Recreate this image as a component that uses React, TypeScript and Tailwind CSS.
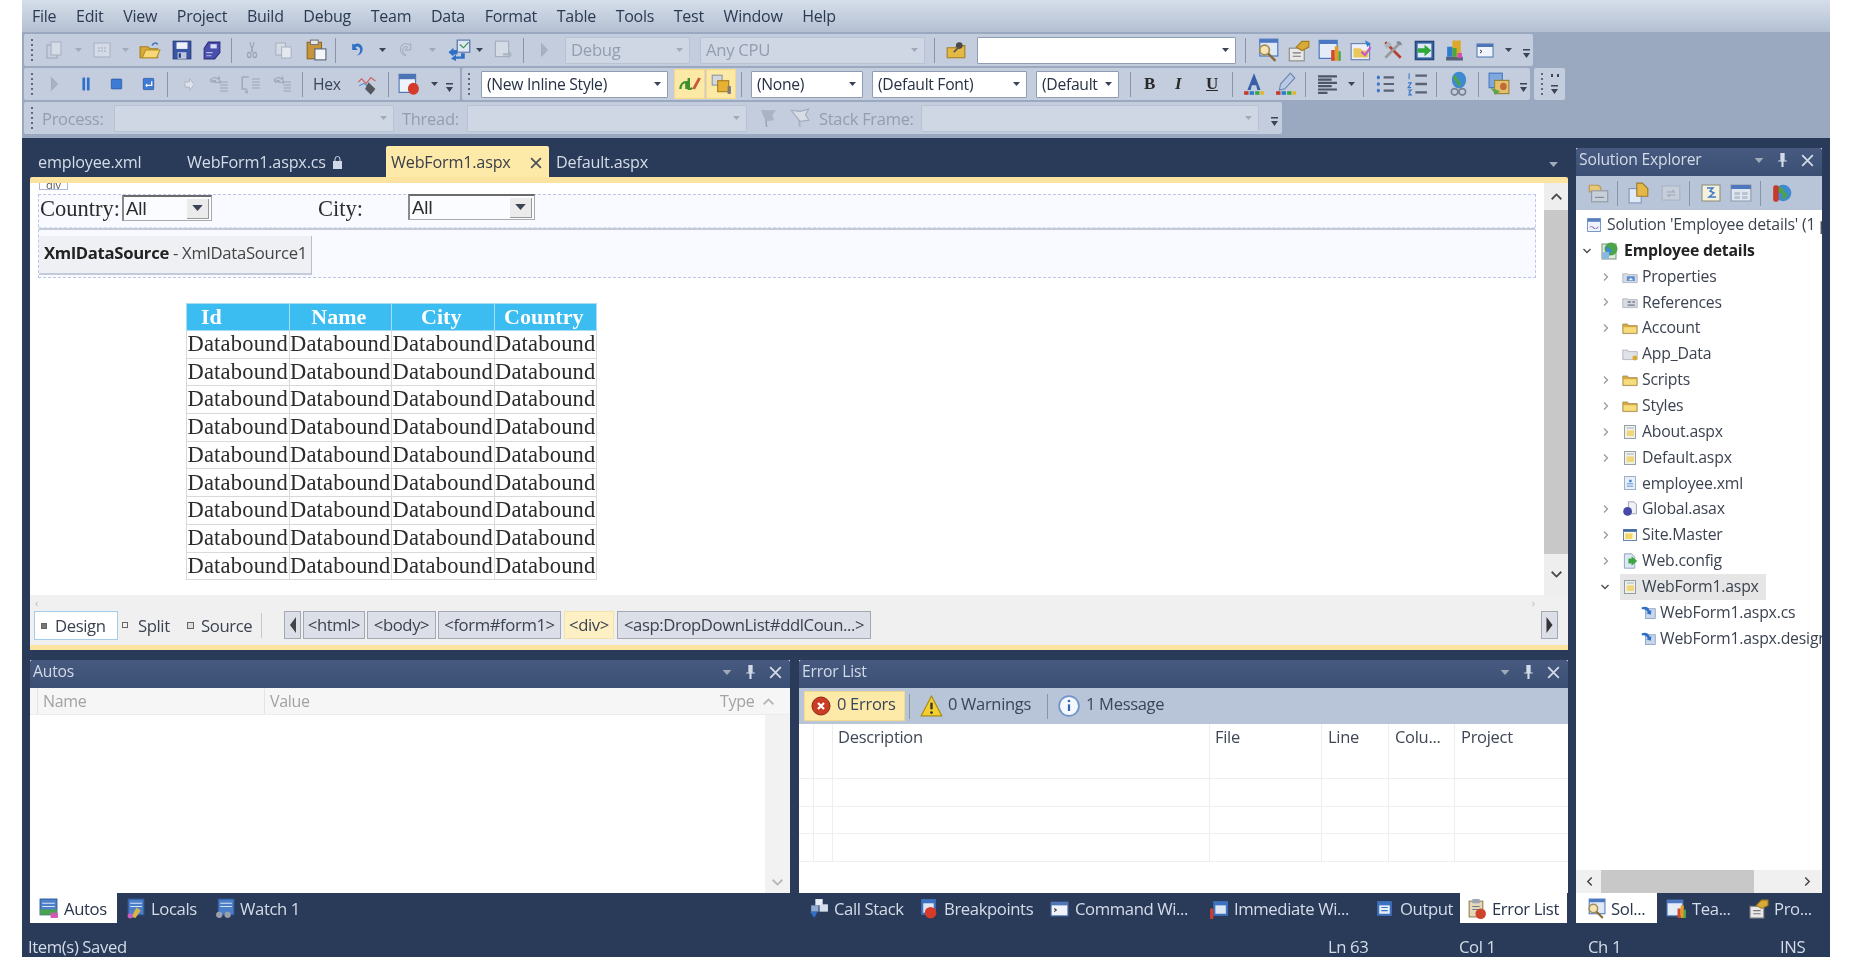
import React from "react";

// small drawn icons, reference is a blurry VS2012 screenshot so these stay simple
const icons: Record<string, React.ReactNode> = {
  newProject: (<><rect x="3" y="5" width="10" height="13" fill="#c9d1dc" stroke="#8b96a8" /><rect x="7" y="2" width="10" height="13" fill="#dde3ec" stroke="#99a3b4" /></>),
  addItem: (<><rect x="2" y="3" width="16" height="14" fill="#dce2eb" stroke="#9aa5b6" /><path d="M6 8h2M9 8h2M12 8h2M6 11h2M9 11h2M12 11h2" stroke="#8e99ab" /></>),
  open: (<><path d="M1 7h7l2 2h7v8H1z" fill="#d9a93a" stroke="#a57d1e" /><path d="M3 17l3-7h13l-3 7z" fill="#f6d876" stroke="#b98f2c" /><path d="M12 6c1-3 4-3 5-1" stroke="#3c6fb5" strokeWidth="1.5" fill="none" /></>),
  save: (<><rect x="2" y="2" width="16" height="16" fill="#3b55a5" stroke="#27397a" /><rect x="5" y="3" width="10" height="6" fill="#eef2f8" /><rect x="6" y="12" width="8" height="6" fill="#bcc6dc" /><rect x="7" y="13" width="2" height="4" fill="#27397a" /></>),
  saveAll: (<><path d="M7 2h11v10l-5 6H3V8z" fill="#4a4fae" stroke="#2c2f7c" /><rect x="9" y="4" width="6" height="4" fill="#d8dcf3" /><path d="M5 12h6M5 15h5" stroke="#b5b9ea" /></>),
  cut: (<><path d="M7 2l4 10M13 2L9 12" stroke="#9aa3b1" strokeWidth="1.6" /><circle cx="6" cy="15" r="2.5" fill="none" stroke="#9aa3b1" strokeWidth="1.5" /><circle cx="14" cy="15" r="2.5" fill="none" stroke="#9aa3b1" strokeWidth="1.5" /></>),
  copy: (<><rect x="2" y="3" width="10" height="12" fill="#d6dce6" stroke="#a6afbe" /><rect x="8" y="7" width="10" height="11" fill="#e4e8ef" stroke="#a6afbe" /></>),
  paste: (<><rect x="2" y="3" width="13" height="15" fill="#c8963a" stroke="#8c6820" /><rect x="5" y="1" width="7" height="4" fill="#e8e8e8" stroke="#7a7a7a" /><rect x="9" y="9" width="10" height="10" fill="#f5f6f8" stroke="#56647c" /></>),
  undo: (<path d="M4 3v7h7l-3-3c3-2 6 0 6 3 0 3-2 5-4 6 4 0 7-3 7-7 0-5-6-8-10-5z" fill="#2f6fc6" />),
  redo: (<path d="M16 3v7H9l3-3c-3-2-6 0-6 3 0 3 2 5 4 6-4 0-7-3-7-7 0-5 6-8 10-5z" fill="none" stroke="#98a2b3" />),
  nav: (<><rect x="9" y="1" width="10" height="11" fill="#dfe7f3" stroke="#5874ad" /><path d="M11 5l3 3 4-5" stroke="#36934a" fill="none" /><path d="M2 12l4-4v2h3v4H6v2l-2-2z" fill="#2f6fc6" /><path d="M12 13v3H8v-2l-4 4 4 2v-2h7v-5z" fill="#2f6fc6" /></>),
  find: (<><rect x="4" y="2" width="12" height="14" fill="#d5dbe5" stroke="#a4adbc" /><path d="M11 13l5 0v-3l3 4-3 4v-3h-5z" fill="#aab3c2" /></>),
  play: (<path d="M3 2l12 8-12 8z" fill="#a9b2c1" stroke="#98a2b2" />),
  searchFolder: (<><path d="M2 8h7l2-2h7v11H2z" fill="#e3b845" stroke="#a57d1e" /><circle cx="13" cy="6" r="3" fill="#4a4a4a" /><path d="M8 12l5-5" stroke="#555" strokeWidth="1.5" /></>),
  finder: (<><rect x="4" y="1" width="15" height="14" fill="#dfe8f5" stroke="#4c78c2" /><rect x="4" y="1" width="15" height="3" fill="#4c78c2" /><circle cx="8" cy="10" r="4" fill="#f3e3b5" stroke="#a38b52" strokeWidth="1.4" /><path d="M11 13l6 6" stroke="#8a6a2e" strokeWidth="2" /></>),
  props: (<><rect x="2" y="8" width="13" height="11" fill="#e8e8e8" stroke="#8d8d8d" /><path d="M8 7l5-5h6v5l-6 3z" fill="#d9a93a" stroke="#a57d1e" /><path d="M5 12h7M5 15h7" stroke="#777" /></>),
  chartWin: (<><rect x="1" y="2" width="15" height="15" fill="#e4ecf8" stroke="#4c78c2" /><rect x="1" y="2" width="15" height="3" fill="#4c78c2" /><rect x="11" y="10" width="3" height="9" fill="#cf4a2d" /><rect x="14" y="7" width="3" height="12" fill="#e39b26" /><rect x="17" y="11" width="2" height="8" fill="#4ba646" /></>),
  mailWin: (<><rect x="1" y="4" width="16" height="14" fill="#eef0f7" stroke="#6781b6" /><path d="M3 8h6l2 2h5v6H3z" fill="#e9c75c" /><path d="M10 11l3 3 5-7" stroke="#c85bc4" strokeWidth="2" fill="none" /><path d="M13 1l5 3-3 3z" fill="#2f7bd0" /></>),
  tools: (<><path d="M3 3l14 14" stroke="#b73e2e" strokeWidth="2.4" /><path d="M17 3L3 17" stroke="#9a9a9a" strokeWidth="2.4" /><path d="M2 6l4-4 3 3-4 4z" fill="#aeb4bd" /><path d="M14 2c3 0 4 2 4 4l-3-1-2-2z" fill="#7f8894" /></>),
  goGreen: (<><rect x="2" y="2" width="16" height="16" fill="#315f9f" stroke="#223f70" /><rect x="4" y="4" width="12" height="12" fill="#e1e9f6" /><path d="M4 8h6V5l6 5-6 5v-3H4z" fill="#2fa838" /></>),
  stack: (<><rect x="2" y="15" width="16" height="3" fill="#56637b" /><rect x="3" y="7" width="7" height="8" fill="#2f7bd0" /><rect x="8" y="2" width="8" height="13" fill="#dca92c" /><rect x="8" y="8" width="4" height="7" fill="#4ba646" /><rect x="13" y="12" width="4" height="4" fill="#d34bb0" /></>),
  cmdWin: (<><rect x="2" y="4" width="16" height="13" fill="#f0f4fa" stroke="#4d74b4" /><rect x="2" y="4" width="16" height="3" fill="#4d74b4" /><path d="M5 10l2 1.5L5 13" stroke="#333" fill="none" /></>),
  pause: (<><rect x="4" y="2" width="4.5" height="16" fill="#2f6fd0" /><rect x="11.5" y="2" width="4.5" height="16" fill="#2f6fd0" /></>),
  stop: (<rect x="2" y="3" width="16" height="14" rx="1" fill="#3d7bd6" stroke="#245199" />),
  restart: (<><rect x="2" y="2" width="16" height="16" rx="1" fill="#3d7bd6" stroke="#245199" /><path d="M14 6v5H8V9l-3 3 3 3v-2h8V6z" fill="#fff" /></>),
  stepA: (<path d="M10 3l7 7-7 7v-4H3V7h7z" fill="#dfe4ec" stroke="#a4adbc" />),
  stepB: (<><path d="M9 8h9M11 11h7M11 14h7M11 17h7" stroke="#9aa3b1" /><path d="M2 6c2-3 5-3 7-1l1-2 1 6-6-1 2-1c-1-1-3-1-4 1z" fill="#c3cad6" stroke="#9aa3b1" /></>),
  stepC: (<><path d="M2 3h6M2 3v12h4" stroke="#a1aab9" fill="none" strokeWidth="1.4" /><path d="M11 5h7M11 8h7M11 11h7M11 14h7" stroke="#9aa3b1" /><path d="M4 18l3-3 0 5z" fill="#a1aab9" /></>),
  hexWave: (<><path d="M1 8l3-3 4 4 4-5 4 3" stroke="#d2605a" fill="none" /><path d="M2 11l4-2 4 3" stroke="#5b8ed1" fill="none" /><path d="M10 8l6 6-4 5-5-5z" fill="#55585e" /></>),
  breakpointWin: (<><rect x="1" y="2" width="15" height="15" fill="#eef2f9" stroke="#4d74b4" /><rect x="1" y="2" width="15" height="4" fill="#4d74b4" /><circle cx="14" cy="14" r="5" fill="#d53b2a" /></>),
  styleAt: (<><path d="M2 15c0-4 2-7 5-7v7M9 4v11c2 0 3-1 3-1" stroke="#3e8f2f" strokeWidth="2" fill="none" /><path d="M13 15l5-11" stroke="#c85b3a" strokeWidth="2.5" /></>),
  styleCopy: (<><rect x="2" y="2" width="9" height="9" fill="#d3d7de" stroke="#8d96a4" /><rect x="7" y="7" width="10" height="10" fill="#e7b233" stroke="#a57d1e" /><rect x="16" y="12" width="3" height="7" fill="#7a7a7a" /></>),
  fontColor: (<><path d="M10 1l6 14h-3l-1-4H8l-1 4H4z" fill="#3b5ea8" /><rect x="1" y="16" width="4" height="3" fill="#c8392b" /><rect x="6" y="16" width="4" height="3" fill="#2b7bd0" /><rect x="11" y="16" width="4" height="3" fill="#3ba73f" /><rect x="16" y="16" width="3" height="3" fill="#e5b524" /></>),
  highlight: (<><path d="M14 1l4 4-9 9-5 1 1-5z" fill="#b8c9e6" stroke="#6d83ac" /><rect x="1" y="16" width="4" height="3" fill="#c8392b" /><rect x="6" y="16" width="4" height="3" fill="#2b7bd0" /><rect x="11" y="16" width="4" height="3" fill="#3ba73f" /><rect x="16" y="16" width="3" height="3" fill="#e5b524" /></>),
  align: (<path d="M1 3h18M1 6h13M1 9h18M1 12h13M1 15h18M1 18h9" stroke="#4d5666" strokeWidth="2" />),
  bullets: (<><path d="M8 4h11M8 10h11M8 16h11" stroke="#5a6374" strokeWidth="2" /><circle cx="2.5" cy="4" r="1.7" fill="#3c78c9" /><circle cx="2.5" cy="10" r="1.7" fill="#3c78c9" /><circle cx="2.5" cy="16" r="1.7" fill="#3c78c9" /></>),
  numbers: (<><path d="M8 3h11M8 10h11M8 17h11" stroke="#5a6374" strokeWidth="2" /><path d="M2 1v5M1 9h3l-3 4h3M1 15h3l-2 2 2 2H1" stroke="#3c78c9" fill="none" /></>),
  globeLink: (<><circle cx="10" cy="7" r="6.5" fill="#3f89d3" /><path d="M6 3c3 1 2 4 5 5 2 1 0 3-1 4-2-1-1-3-3-4-2-1-3-3-1-5z" fill="#4aa54a" /><path d="M3 16a3 2.5 0 0 1 6 0 3 2.5 0 0 1-6 0M10 16a3 2.5 0 0 1 6 0 3 2.5 0 0 1-6 0" stroke="#78808f" strokeWidth="1.4" fill="none" /></>),
  webTools: (<><rect x="1" y="1" width="12" height="12" fill="#7fa9de" stroke="#4c78c2" /><rect x="6" y="7" width="13" height="11" fill="#e3c16a" stroke="#98823f" /><path d="M2 13l5 6 4-3" fill="#5da34b" /><circle cx="14" cy="12" r="3" fill="#c26a3a" /></>),
  flag: (<><path d="M7 18L5 3" stroke="#98a2b2" strokeWidth="1.6" /><path d="M1 3h16l-4 4 2 5-9 1z" fill="#aab3c2" /></>),
  flagX: (<><path d="M10 18L8 3" stroke="#a8b1bf" strokeWidth="1.6" /><path d="M2 3l8 1 8-2-3 5 3 5-8 1z" fill="#d7dce5" stroke="#a3acba" /></>),
  seFiles: (<><path d="M2 3h8l2 2v4H2z" fill="#e9c775" stroke="#b69a57" /><rect x="4" y="8" width="14" height="10" fill="#c9cfd9" stroke="#8f99a9" /><path d="M7 14h8" stroke="#7b8798" /></>),
  seCopy: (<><rect x="1" y="6" width="11" height="13" fill="#dfe9f7" stroke="#7e97bd" /><path d="M8 1h5l5 5v7H8z" fill="#e4b94a" stroke="#9a7a2e" /></>),
  seRefresh: (<><rect x="2" y="3" width="16" height="14" fill="#ccd3de" stroke="#a3acba" /><path d="M6 9h7l-2-2M14 12H7l2 2" stroke="#8f99a9" fill="none" /></>),
  seCode: (<><rect x="1" y="2" width="18" height="16" fill="#f3f0de" stroke="#8a8a72" /><path d="M6 5h6l-3 3 4 2-5 4h7" stroke="#3c78c9" fill="none" strokeWidth="1.4" /></>),
  seDesign: (<><rect x="1" y="2" width="18" height="16" fill="#dfe6f0" stroke="#8e99ab" /><rect x="1" y="2" width="18" height="4" fill="#4d78bd" /><path d="M4 9h5v3H4zM11 9h5v3h-5zM4 13h5v3H4zM11 13h5v3h-5z" fill="#b9c3d2" /></>),
  seGlobe: (<><circle cx="11" cy="10" r="7.5" fill="#3f89d3" /><path d="M8 4c4 1 3 5 6 6 2 1 0 5-2 6-3-2 0-4-3-6-3-1-4-4-1-6z" fill="#4aa54a" /><rect x="2" y="3" width="5" height="15" rx="2" fill="#c8392b" /></>),
  solution: (<><rect x="2" y="2" width="16" height="16" fill="#eef2fa" stroke="#5b7fbd" /><rect x="2" y="2" width="16" height="4" fill="#5b7fbd" /><path d="M4 14c2-4 4-3 6-1s4 3 6-1c-2 0-5 5-7 2s-3-2-5 0z" fill="#8a58b8" /></>),
  webProject: (<><rect x="2" y="3" width="14" height="15" fill="#dcecdc" stroke="#7c8f7c" /><circle cx="11" cy="8" r="6.5" fill="#4ba646" /><path d="M7 5c3 1 2 3 5 4l-3 6c-3-2-4-6-2-10z" fill="#3f89d3" /><rect x="2" y="11" width="7" height="7" fill="#8ab7dd" /></>),
  folderProps: (<><path d="M1 6h6l1 1h11v10H1z" fill="#d8dce2" stroke="#a8afba" /><path d="M6 9h10v6H6z" fill="#5d8fd0" /><path d="M8 14l3-3 3 3z" fill="#e4ecf8" /></>),
  folderRefs: (<><path d="M1 6h6l1 1h11v10H1z" fill="#d8dce2" stroke="#a8afba" /><path d="M7 10h4M13 10h3M7 14h9" stroke="#6f7785" strokeWidth="1.6" /></>),
  folder: (<><path d="M1 5h6l1 2h11v10H1z" fill="#d9a93a" stroke="#a08c5f" /><path d="M2 9h16v7H2z" fill="#f7dc7c" /></>),
  folderGray: (<><path d="M1 5h6l1 2h11v10H1z" fill="#dfe2e7" stroke="#a8afba" /><circle cx="16" cy="15" r="3" fill="#e0a92e" /></>),
  aspx: (<><rect x="3" y="2" width="14" height="16" fill="#eef1e4" stroke="#7c8a9c" /><rect x="6" y="8" width="9" height="7" fill="#f2d77a" /><path d="M6 5h9" stroke="#8fa4c0" /></>),
  xml: (<><rect x="3" y="2" width="14" height="16" fill="#e7eef8" stroke="#87a0c2" /><path d="M9 6h3v3H9z" fill="#3f83cf" /><path d="M6 11h8M6 14h8" stroke="#3f83cf" /></>),
  asax: (<><path d="M8 1h7l3 3v12H8z" fill="#eef1f6" stroke="#8a94a6" /><circle cx="7" cy="13" r="5.5" fill="#4549a8" /></>),
  master: (<><rect x="2" y="3" width="16" height="14" fill="#fbf7df" stroke="#3e68a8" /><rect x="2" y="3" width="16" height="3" fill="#3e68a8" /><rect x="4" y="8" width="9" height="7" fill="#f3d76a" /></>),
  config: (<><path d="M3 1h9l4 4v14H3z" fill="#dde7f5" stroke="#7e93b3" /><path d="M8 7h4V4l7 6-7 6v-3H8z" fill="#3ba73f" /></>),
  csFile: (<><rect x="6" y="5" width="13" height="13" fill="#c8d6ea" stroke="#7e97bd" /><path d="M1 3c6-2 9 0 11 5l2-1-1 6-6-2 2-1C8 7 5 5 1 6z" fill="#2f6fc6" /></>),
  errorCirc: (<><circle cx="10" cy="10" r="9" fill="#c83d23" stroke="#8f2814" /><path d="M7 7l6 6M13 7l-6 6" stroke="#fff" strokeWidth="2.2" /></>),
  warn: (<><path d="M10 1l9 18H1z" fill="#f3d02f" stroke="#a68a12" /><path d="M10 7v6" stroke="#333" strokeWidth="2" /><circle cx="10" cy="16" r="1.2" fill="#333" /></>),
  info: (<><circle cx="10" cy="10" r="9" fill="#f5f8fd" stroke="#6f95c9" strokeWidth="1.6" /><path d="M10 8.5v6" stroke="#2f66b5" strokeWidth="2" /><circle cx="10" cy="5.5" r="1.2" fill="#2f66b5" /></>),
  tabAutos: (<><rect x="2" y="1" width="16" height="15" fill="#4d7fc9" stroke="#2f5a9c" /><path d="M4 5h12M4 8h12" stroke="#d9e5f6" /><path d="M2 11h16v5H2z" fill="#49a34a" /><path d="M12 14h7v5h-7z" fill="#d05bb6" /></>),
  tabLocals: (<><rect x="3" y="1" width="15" height="15" fill="#4d7fc9" stroke="#2f5a9c" /><path d="M5 5h11M5 8h11" stroke="#d9e5f6" /><path d="M6 18l5-9 4 3-5 7z" fill="#d8b54b" /><circle cx="5" cy="17" r="2.5" fill="#c85bc4" /></>),
  tabWatch: (<><rect x="4" y="1" width="15" height="15" fill="#4d7fc9" stroke="#2f5a9c" /><path d="M6 5h11M6 8h11" stroke="#d9e5f6" /><circle cx="5" cy="16" r="3" fill="#9aa0ab" /><circle cx="13" cy="16" r="3" fill="#9aa0ab" /></>),
  callStack: (<><rect x="7" y="1" width="7" height="6" fill="#e7edf6" /><rect x="11" y="6" width="8" height="7" fill="#d5dfec" /><rect x="3" y="7" width="7" height="6" fill="#8eaad0" /><path d="M2 13h7l-3 6z" fill="#2f6fc6" /></>),
  breakWin: (<><rect x="3" y="1" width="14" height="15" fill="#3d72bf" /><rect x="5" y="5" width="10" height="9" fill="#dbe5f3" /><circle cx="12" cy="14" r="5.5" fill="#d53b2a" /></>),
  immWin: (<><rect x="5" y="3" width="14" height="14" fill="#3d72bf" /><rect x="7" y="7" width="10" height="8" fill="#dbe5f3" /><rect x="2" y="10" width="3" height="10" fill="#d53b2a" /></>),
  outWin: (<><rect x="3" y="3" width="14" height="14" fill="#3d72bf" /><rect x="5" y="7" width="10" height="8" fill="#e8eef7" /><path d="M7 9h6M7 12h6" stroke="#3d72bf" /></>),
  errList: (<><rect x="3" y="3" width="13" height="15" fill="#e5d8b8" stroke="#8e7b4d" /><rect x="6" y="1" width="7" height="4" fill="#9ba5b6" /><path d="M6 8h7M6 11h7" stroke="#70798a" /><circle cx="14" cy="15" r="5" fill="#d0432b" /></>),
};

function Ic({ name, className = "w-[20px] h-[20px]", dim }: { name: string; className?: string; dim?: boolean }) {
  return (
    <svg viewBox="0 0 20 20" preserveAspectRatio="none" className={`${className} shrink-0 ${dim ? "opacity-70" : ""}`}>
      {icons[name]}
    </svg>
  );
}

function Grip({ className = "" }: { className?: string }) {
  return (
    <div className={`flex flex-col gap-[3px] shrink-0 ${className}`}>
      <div className="w-[2px] h-[2px] bg-[#5c6a80]" />
      <div className="w-[2px] h-[2px] bg-[#5c6a80]" />
      <div className="w-[2px] h-[2px] bg-[#5c6a80]" />
      <div className="w-[2px] h-[2px] bg-[#5c6a80]" />
      <div className="w-[2px] h-[2px] bg-[#5c6a80]" />
    </div>
  );
}

function Sep({ className = "" }: { className?: string }) {
  return <div className={`w-px h-[25px] bg-[#8794a9] shrink-0 ${className}`} />;
}

function Caret({ className = "", light }: { className?: string; light?: boolean }) {
  return (
    <svg viewBox="0 0 7 4" className={`w-[7px] h-[4px] shrink-0 ${className}`}>
      <path d="M0 0h7L3.5 4z" fill={light ? "#a0aaba" : "#3a4456"} />
    </svg>
  );
}

function Overflow({ className = "" }: { className?: string }) {
  return (
    <svg viewBox="0 0 7 10" className={`w-[7px] h-[10px] shrink-0 mt-[8px] ${className}`}>
      <path d="M0 0h7v1.5H0zM0 4h7L3.5 9z" fill="#3a4456" />
    </svg>
  );
}

function Combo({ w, text, white }: { w: string; text?: string; white?: boolean }) {
  return (
    <div
      className={`${w} h-[27px] shrink-0 flex items-center justify-between px-[5px] border rounded-[1px] ${
        white ? "bg-white border-[#8f9db3] text-[#263245] text-[15.7px]" : "bg-[#cfd7e4] border-[#b7c2d2] text-[#929db0] text-[16.7px]"
      }`}
    >
      <span className={`whitespace-nowrap ${white ? "pt-[2px]" : ""}`}>{text}</span>
      <Caret light={!white} className="mr-[1px]" />
    </div>
  );
}

function Strip({ className = "", children }: { className?: string; children: React.ReactNode }) {
  return <div className={`h-[32px] flex items-center rounded-[2px] bg-[#c3cddd] ${className}`}>{children}</div>;
}

function TitleBar({ title }: { title: string }) {
  return (
    <div className="h-[28px] shrink-0 flex items-center justify-between pl-[3px] pr-[8px] pb-[4px] bg-gradient-to-b from-[#47597e] to-[#3b4f74] text-[#d3dbe8] rounded-t-[2px]">
      <span className="text-[15.7px] tracking-[-0.2px] whitespace-nowrap">{title}</span>
      <div className="flex items-center gap-[14px]">
        <Caret className="!w-[10px] !h-[5px]" light />
        <svg viewBox="0 0 8 13" className="w-[9px] h-[14px]"><path d="M2 0h4v7h2v1H5v5H3V8H0V7h2z" fill="#d3dbe8" /></svg>
        <svg viewBox="0 0 11 11" className="w-[13px] h-[13px]"><path d="M1 1l9 9M10 1l-9 9" stroke="#d3dbe8" strokeWidth="1.5" /></svg>
      </div>
    </div>
  );
}

function Crumb({ w, text, active }: { w: string; text: string; active?: boolean }) {
  return (
    <div
      className={`${w} h-[28px] shrink-0 flex items-center justify-center border whitespace-nowrap ${
        active ? "bg-[#fdf0c4] border-[#f2e3ae]" : "bg-[#dcdfe7] border-[#a3a9b3]"
      }`}
    >
      {text}
    </div>
  );
}

function BottomTab({ icon, label, active, className = "" }: { icon: string; label: string; active?: boolean; className?: string }) {
  return (
    <div
      className={`h-[30px] shrink-0 flex items-center gap-[5px] whitespace-nowrap ${
        active ? "bg-white text-[#28354b] px-[8px]" : "text-[#d5dce8]"
      } ${className}`}
    >
      <Ic name={icon} className="w-[21px] h-[21px]" />
      <span>{label}</span>
    </div>
  );
}

const treeRows = [
  { icon: "folderProps", label: "Properties", arrow: true },
  { icon: "folderRefs", label: "References", arrow: true },
  { icon: "folder", label: "Account", arrow: true },
  { icon: "folderGray", label: "App_Data" },
  { icon: "folder", label: "Scripts", arrow: true },
  { icon: "folder", label: "Styles", arrow: true },
  { icon: "aspx", label: "About.aspx", arrow: true },
  { icon: "aspx", label: "Default.aspx", arrow: true },
  { icon: "xml", label: "employee.xml" },
  { icon: "asax", label: "Global.asax", arrow: true },
  { icon: "master", label: "Site.Master", arrow: true },
  { icon: "config", label: "Web.config", arrow: true },
];

function Chevron({ open, className = "" }: { open?: boolean; className?: string }) {
  return (
    <svg viewBox="0 0 8 8" className={`w-[8px] h-[8px] shrink-0 ${className}`}>
      <path d={open ? "M0.5 2l3.5 3.5L7.5 2" : "M2 0.5L5.5 4 2 7.5"} fill="none" stroke={open ? "#4a4a4a" : "#9a9a9a"} strokeWidth="1.3" />
    </svg>
  );
}

const gridRows = [0, 1, 2, 3, 4, 5, 6, 7, 8];
const gridCols = ["w-[103px]", "w-[103px]", "w-[103px]", "w-[102px]"];

export default function App() {
  return (
    <div className="w-[1863px] h-[957px] overflow-hidden bg-white blur-[0.65px] font-['Open_Sans',sans-serif]">
      <div className="ml-[22px] w-[1808px] h-[957px] flex flex-col bg-[#293b59] overflow-hidden">
        {/* Menu */}
        <div className="h-[32px] shrink-0 flex items-center pl-[10px] gap-[19.7px] bg-gradient-to-b from-[#d5deea] to-[#b4c0d2] text-[16px] tracking-[-0.25px] text-[#2b3a52]">
          <span>File</span>
          <span>Edit</span>
          <span>View</span>
          <span>Project</span>
          <span>Build</span>
          <span>Debug</span>
          <span>Team</span>
          <span>Data</span>
          <span>Format</span>
          <span>Table</span>
          <span>Tools</span>
          <span>Test</span>
          <span>Window</span>
          <span>Help</span>
        </div>

        {/* Toolbars */}
        <div className="h-[106px] shrink-0 flex flex-col gap-[2px] pt-[2px] pl-[2px] bg-[#9ba9c0] text-[15.7px] tracking-[-0.3px]">
          <Strip className="w-[1509px]">
            <Grip className="ml-[7px]" />
            <Ic name="newProject" className="ml-[11px] w-[20px] h-[20px]" dim />
            <Caret light className="ml-[11px]" />
            <Ic name="addItem" className="ml-[10px] w-[20px] h-[20px]" dim />
            <Caret light className="ml-[10px]" />
            <Ic name="open" className="ml-[10px] w-[22px] h-[22px]" />
            <Ic name="save" className="ml-[10px] w-[22px] h-[22px]" />
            <Ic name="saveAll" className="ml-[8px] w-[21px] h-[21px]" />
            <Sep className="ml-[9px]" />
            <Ic name="cut" className="ml-[13px] w-[14px] h-[20px]" />
            <Ic name="copy" className="ml-[15px] w-[19px] h-[20px]" />
            <Ic name="paste" className="ml-[12px] w-[22px] h-[22px]" />
            <Sep className="ml-[8px]" />
            <Ic name="undo" className="ml-[13px] w-[16px] h-[18px]" />
            <Caret className="ml-[14px]" />
            <Ic name="redo" className="ml-[12px] w-[16px] h-[18px]" />
            <Caret light className="ml-[15px]" />
            <Ic name="nav" className="ml-[10px] w-[25px] h-[22px]" />
            <Caret className="ml-[5px]" />
            <Ic name="find" className="ml-[8px] w-[22px] h-[22px]" />
            <Sep className="ml-[10px]" />
            <Ic name="play" className="ml-[16px] w-[10px] h-[16px]" />
            <div className="ml-[15px]"><Combo w="w-[125px]" text="Debug" /></div>
            <div className="ml-[10px]"><Combo w="w-[225px]" text="Any CPU" /></div>
            <Sep className="ml-[9px]" />
            <Ic name="searchFolder" className="ml-[10px] w-[22px] h-[22px]" />
            <div className="ml-[10px]"><Combo w="w-[259px]" white /></div>
            <Sep className="ml-[9px]" />
            <Ic name="finder" className="ml-[9px] w-[24px] h-[24px]" />
            <Ic name="props" className="ml-[8px] w-[23px] h-[23px]" />
            <Ic name="chartWin" className="ml-[8px] w-[24px] h-[24px]" />
            <Ic name="mailWin" className="ml-[8px] w-[23px] h-[23px]" />
            <Ic name="tools" className="ml-[9px] w-[22px] h-[22px]" />
            <Ic name="goGreen" className="ml-[9px] w-[23px] h-[23px]" />
            <Ic name="stack" className="ml-[8px] w-[21px] h-[25px]" />
            <Ic name="cmdWin" className="ml-[10px] w-[20px] h-[20px]" />
            <Caret className="ml-[10px]" />
            <Overflow className="ml-[11px]" />
          </Strip>

          <div className="flex gap-[2px]">
            <Strip className="w-[436px]">
              <Grip className="ml-[7px]" />
              <Ic name="play" className="ml-[17px] w-[10px] h-[16px]" />
              <Ic name="pause" className="ml-[20px] w-[12px] h-[16px]" />
              <Ic name="stop" className="ml-[18px] w-[13px] h-[14px]" />
              <Ic name="restart" className="ml-[19px] w-[13px] h-[14px]" />
              <Sep className="ml-[12px]" />
              <Ic name="stepA" className="ml-[15px] w-[13px] h-[17px]" />
              <Ic name="stepB" className="ml-[12px] w-[22px] h-[20px]" />
              <Ic name="stepC" className="ml-[10px] w-[22px] h-[20px]" />
              <Ic name="stepB" className="ml-[10px] w-[21px] h-[20px]" />
              <Sep className="ml-[9px]" />
              <span className="ml-[10px] w-[28px] pt-[2px] text-[#37445a]">Hex</span>
              <Ic name="hexWave" className="ml-[16px] w-[23px] h-[23px]" />
              <Sep className="ml-[8px]" />
              <Ic name="breakpointWin" className="ml-[9px] w-[22px] h-[24px]" />
              <Caret className="ml-[11px]" />
              <Overflow className="ml-[8px]" />
            </Strip>
            <Strip className="w-[1068px]">
              <Grip className="ml-[6px]" />
              <div className="ml-[11px]"><Combo w="w-[187px]" text="(New Inline Style)" white /></div>
              <div className="ml-[6px] w-[31px] h-[30px] shrink-0 flex items-center justify-center bg-[#fde9a6] border border-[#f4d98a]"><Ic name="styleAt" className="w-[24px] h-[20px]" /></div>
              <div className="ml-[1px] w-[30px] h-[30px] shrink-0 flex items-center justify-center bg-[#fde9a6] border border-[#f4d98a]"><Ic name="styleCopy" className="w-[22px] h-[22px]" /></div>
              <Sep className="ml-[5px]" />
              <div className="ml-[9px]"><Combo w="w-[112px]" text="(None)" white /></div>
              <div className="ml-[9px]"><Combo w="w-[155px]" text="(Default Font)" white /></div>
              <div className="ml-[9px]"><Combo w="w-[83px]" text="(Default" white /></div>
              <Sep className="ml-[11px]" />
              <span className="ml-[13px] w-[12px] font-['Liberation_Serif',serif] font-bold text-[17px] text-[#2a2a2a]">B</span>
              <span className="ml-[19px] w-[12px] font-['Liberation_Serif',serif] font-bold italic text-[17px] text-[#2a2a2a]">I</span>
              <span className="ml-[19px] w-[13px] font-['Liberation_Serif',serif] font-bold underline text-[17px] text-[#2a2a2a]">U</span>
              <Sep className="ml-[13px]" />
              <Ic name="fontColor" className="ml-[10px] w-[22px] h-[24px]" />
              <Ic name="highlight" className="ml-[10px] w-[22px] h-[24px]" />
              <Sep className="ml-[8px]" />
              <Ic name="align" className="ml-[11px] w-[21px] h-[22px]" />
              <Caret className="ml-[10px]" />
              <Sep className="ml-[8px]" />
              <Ic name="bullets" className="ml-[12px] w-[19px] h-[22px]" />
              <Ic name="numbers" className="ml-[12px] w-[21px] h-[24px]" />
              <Sep className="ml-[8px]" />
              <Ic name="globeLink" className="ml-[11px] w-[22px] h-[26px]" />
              <Sep className="ml-[8px]" />
              <Ic name="webTools" className="ml-[9px] w-[22px] h-[24px]" />
              <Overflow className="ml-[10px]" />
            </Strip>
            <Strip className="w-[31px] ml-[2px] justify-center gap-[8px]">
              <Grip />
              <div className="flex flex-col gap-[3px] items-center">
                <span className="w-[8px] h-[3px] border-x-2 border-[#3a4456]" />
                <Overflow className="!mt-[5px]" />
              </div>
            </Strip>
          </div>

          <Strip className="w-[1258px]">
            <Grip className="ml-[7px]" />
            <span className="ml-[9px] w-[61px] pt-[2px] text-[16.5px] text-[#929db0]">Process:</span>
            <div className="ml-[11px]"><Combo w="w-[280px]" /></div>
            <span className="ml-[8px] w-[54px] pt-[2px] text-[16.5px] text-[#929db0]">Thread:</span>
            <div className="ml-[11px]"><Combo w="w-[280px]" /></div>
            <Ic name="flag" className="ml-[13px] w-[19px] h-[22px]" />
            <Ic name="flagX" className="ml-[10px] w-[22px] h-[22px]" />
            <span className="ml-[8px] w-[92px] pt-[2px] whitespace-nowrap text-[16.5px] text-[#929db0]">Stack Frame:</span>
            <div className="ml-[10px]"><Combo w="w-[338px]" /></div>
            <Overflow className="ml-[12px]" />
          </Strip>
        </div>

        {/* Workspace */}
        <div className="flex-1 min-h-0 flex pl-[8px] gap-[8px]">
          {/* left column */}
          <div className="w-[1538px] shrink-0 flex flex-col">
            <div className="h-[39px] shrink-0 flex items-end text-[16.2px] tracking-[-0.2px]">
              <span className="ml-[8px] w-[135px] h-[31px] pt-[2px] flex items-center text-[#d5dce8] whitespace-nowrap">employee.xml</span>
              <span className="ml-[14px] w-[182px] h-[31px] pt-[2px] flex items-center gap-[6px] text-[#d5dce8] whitespace-nowrap">
                WebForm1.aspx.cs
                <svg viewBox="0 0 11 13" className="w-[11px] h-[13px]"><path d="M3 5V3a2.5 2.5 0 0 1 5 0v2" fill="none" stroke="#cfd8e6" /><rect x="1" y="5" width="9" height="8" fill="#cfd8e6" /></svg>
              </span>
              <div className="ml-[17px] w-[163px] h-[31px] pt-[2px] flex items-center justify-between px-[5px] rounded-t-[2px] bg-[#fde9a8] text-[#3a3f4a] whitespace-nowrap">
                WebForm1.aspx
                <svg viewBox="0 0 11 11" className="w-[12px] h-[12px] mr-[2px]"><path d="M1 1l9 9M10 1l-9 9" stroke="#4a4f5a" strokeWidth="1.5" /></svg>
              </div>
              <span className="ml-[7px] h-[31px] pt-[2px] flex items-center text-[#d5dce8] whitespace-nowrap">Default.aspx</span>
              <Caret className="ml-auto mr-[10px] mb-[10px] !w-[9px] !h-[5px]" light />
            </div>

            {/* editor */}
            <div className="h-[473px] shrink-0 flex flex-col border-t-[6px] border-b-[5px] border-[#fde3a0] bg-white rounded-t-[2px]">
              <div className="flex-1 min-h-0 flex">
                <div className="flex-1 min-w-0 flex flex-col pl-[8px] pr-[8px]">
                  <div className="ml-[1px] w-[29px] h-[7px] shrink-0 border border-t-0 border-[#a9b9d9] text-[11px] leading-[4px] text-center text-[#555] overflow-hidden">div</div>
                  <div className="mt-[4px] h-[84px] shrink-0 border border-dashed border-[#b8c8e6] bg-[#f8faff] flex flex-col font-['Liberation_Serif',serif] text-[22.5px] text-[#2b2b2b]">
                    <div className="h-[33px] shrink-0 flex items-center border-b border-dashed border-[#d5deef]">
                      <span className="ml-[1px] w-[82px] -mt-[5px]">Country:</span>
                      <div className="w-[90px] h-[26px] -mt-[6px] flex items-center justify-between border-t-2 border-l-2 border-r border-b border-t-[#6b6b6b] border-l-[#8a8a8a] border-r-[#aaa] border-b-[#aaa] pl-[2px] pr-[2px] font-['Liberation_Sans',sans-serif] text-[18.5px] bg-[#fbfcff]">
                        All
                        <span className="w-[22px] h-[20px] flex items-center justify-center bg-[#ebebeb] border-b border-r border-[#999]"><Caret className="!w-[11px] !h-[6px]" /></span>
                      </div>
                      <span className="ml-[106px] w-[90px] -mt-[5px]">City:</span>
                      <div className="w-[127px] h-[26px] -mt-[8px] flex items-center justify-between border-t-2 border-l-2 border-r border-b border-t-[#6b6b6b] border-l-[#8a8a8a] border-r-[#aaa] border-b-[#aaa] pl-[2px] pr-[2px] font-['Liberation_Sans',sans-serif] text-[18.5px] bg-[#fbfcff]">
                        All
                        <span className="w-[22px] h-[20px] flex items-center justify-center bg-[#ebebeb] border-b border-r border-[#999]"><Caret className="!w-[11px] !h-[6px]" /></span>
                      </div>
                    </div>
                    <div className="h-[2px] shrink-0 bg-[#c5cbd6]" />
                    <div className="mt-[6px] w-[273px] h-[39px] flex items-center pl-[5px] pb-[3px] bg-[#eef0f3] border-r border-b-2 border-r-[#b9bfca] border-b-[#c4cbdb] font-['Open_Sans',sans-serif] text-[16.7px] tracking-[-0.3px] whitespace-nowrap text-[#444]">
                      <b className="text-[#222]">XmlDataSource</b>&nbsp;- XmlDataSource1
                    </div>
                  </div>

                  <table className="mt-[25px] ml-[148px] w-[411px] border-collapse font-['Liberation_Serif',serif] text-[22.5px] text-[#2b2b2b] table-fixed">
                    <thead>
                      <tr className="h-[27px] bg-[#3bbdf1] text-white text-[22px] font-bold">
                        <th className="border border-[#a8ddf5] font-bold leading-none text-left pl-[14px]">Id</th>
                        <th className="border border-[#a8ddf5] font-bold leading-none pr-[3px]">Name</th>
                        <th className="border border-[#a8ddf5] font-bold leading-none pr-[3px]">City</th>
                        <th className="border border-[#a8ddf5] font-bold leading-none pr-[3px]">Country</th>
                      </tr>
                    </thead>
                    <tbody>
                      {gridRows.map((r) => (
                        <tr key={r} className="h-[27.7px]">
                          {gridCols.map((c, i) => (
                            <td key={i} className={`${c} border border-[#d9d9d9] text-center leading-none whitespace-nowrap overflow-hidden tracking-[0.2px]`}>Databound</td>
                          ))}
                        </tr>
                      ))}
                    </tbody>
                  </table>
                </div>
                <div className="w-[24px] shrink-0 flex flex-col items-center bg-[#eeeeee] relative">
                  <div className="h-[27px] w-full flex items-center justify-center"><Chevron open className="rotate-180 !w-[11px] !h-[11px]" /></div>
                  <div className="w-full h-[344px] bg-[#c8c8c8]" />
                  <div className="h-[41px] w-full flex items-center justify-center"><Chevron open className="!w-[11px] !h-[11px]" /></div>
                </div>
              </div>
              <div className="h-[16px] shrink-0 flex items-center justify-between bg-[#f0f0f0] px-[5px] text-[#bbb] text-[11px]"><span>‹</span><span className="mr-[28px]">›</span></div>
              <div className="h-[34px] shrink-0 flex items-start bg-[#f0f0f0] text-[16.7px] tracking-[-0.4px] text-[#3b4250]">
                <div className="ml-[4px] w-[84px] h-[29px] flex items-center gap-[8px] pl-[6px] bg-white border border-[#a5cdea]">
                  <span className="w-[6px] h-[6px] border border-[#666] bg-[#777]" />
                  Design
                </div>
                <span className="ml-[4px] mt-[11px] w-[6px] h-[6px] border border-[#666]" />
                <span className="ml-[10px] mt-[2px] w-[31px]">Split</span>
                <span className="ml-[18px] mt-[11px] w-[7px] h-[7px] border border-[#666] bg-[#ddd]" />
                <span className="ml-[7px] mt-[2px] w-[50px]">Source</span>
                <div className="ml-[10px] mt-[2px] w-px h-[25px] bg-[#c8c8c8]" />
                <div className="ml-[22px] w-[17px] h-[28px] flex items-center justify-center bg-[#dcdfe7] border border-[#a3a9b3]"><svg viewBox="0 0 6 16" className="w-[6px] h-[16px]"><path d="M6 0v16L0 8z" fill="#444" /></svg></div>
                <div className="ml-[2px]"><Crumb w="w-[62px]" text="<html>" /></div>
                <div className="ml-[2px]"><Crumb w="w-[69px]" text="<body>" /></div>
                <div className="ml-[2px]"><Crumb w="w-[123px]" text="<form#form1>" /></div>
                <div className="ml-[3px]"><Crumb w="w-[50px]" text="<div>" active /></div>
                <div className="ml-[3px]"><Crumb w="w-[254px]" text="<asp:DropDownList#ddlCoun...>" /></div>
                <div className="ml-auto mr-[10px] w-[17px] h-[28px] flex items-center justify-center bg-[#dcdfe7] border border-[#a3a9b3]"><svg viewBox="0 0 6 16" className="w-[7px] h-[16px]"><path d="M0 0v16L6 8z" fill="#333" /></svg></div>
              </div>
            </div>

            {/* bottom panels */}
            <div className="mt-[10px] h-[233px] shrink-0 flex gap-[9px]">
              <div className="w-[760px] flex flex-col bg-white">
                <TitleBar title="Autos" />
                <div className="h-[27px] shrink-0 flex items-center bg-[#f6f6f6] border-b border-[#ececec] text-[16px] tracking-[-0.3px] text-[#a2a2a2]">
                  <span className="ml-[7px] w-px h-full bg-[#e4e4e4]" />
                  <span className="ml-[5px] w-[221px]">Name</span>
                  <span className="w-px h-full bg-[#e4e4e4]" />
                  <span className="ml-[5px] w-[450px]">Value</span>
                  <span className="w-[40px]">Type</span>
                  <Chevron open className="rotate-180 ml-[3px] !w-[11px] !h-[11px] [&>path]:stroke-[#b5b5b5]" />
                </div>
                <div className="flex-1 flex justify-end">
                  <div className="w-[25px] bg-[#f2f2f2] flex flex-col justify-end items-center pb-[5px]"><Chevron open className="!w-[11px] !h-[11px] [&>path]:stroke-[#b5b5b5]" /></div>
                </div>
              </div>

              <div className="w-[769px] flex flex-col bg-white">
                <TitleBar title="Error List" />
                <div className="h-[36px] shrink-0 flex items-center bg-[#b8c4d7] text-[16.5px] tracking-[-0.3px] text-[#3a4658]">
                  <div className="ml-[5px] w-[101px] h-[30px] flex items-center gap-[6px] pl-[6px] pb-[3px] whitespace-nowrap bg-[#fde9a8] border border-[#f3d98b]">
                    <Ic name="errorCirc" className="w-[20px] h-[20px] mt-[3px]" />
                    0 Errors
                  </div>
                  <Sep className="ml-[4px]" />
                  <Ic name="warn" className="ml-[10px] w-[23px] h-[22px]" />
                  <span className="ml-[5px] w-[84px] pb-[3px] whitespace-nowrap">0 Warnings</span>
                  <Sep className="ml-[15px]" />
                  <Ic name="info" className="ml-[10px] w-[22px] h-[22px]" />
                  <span className="ml-[6px] pb-[3px] whitespace-nowrap">1 Message</span>
                </div>
                <div className="h-[55px] shrink-0 flex items-start text-[16.5px] tracking-[-0.3px] text-[#3f4756] border-b border-[#f0f0f0]">
                  <span className="ml-[14px] w-px h-full bg-[#eeeeee]" />
                  <span className="ml-[18px] w-px h-full bg-[#eeeeee]" />
                  <span className="ml-[5px] w-[371px] pt-[1px]">Description</span>
                  <span className="w-px h-full bg-[#eeeeee]" />
                  <span className="ml-[5px] w-[106px] pt-[1px]">File</span>
                  <span className="w-px h-full bg-[#eeeeee]" />
                  <span className="ml-[6px] w-[60px] pt-[1px]">Line</span>
                  <span className="w-px h-full bg-[#eeeeee]" />
                  <span className="ml-[6px] w-[59px] pt-[1px]">Colu...</span>
                  <span className="w-px h-full bg-[#eeeeee]" />
                  <span className="ml-[6px] pt-[1px]">Project</span>
                </div>
                {[0, 1, 2].map((r) => (
                  <div key={r} className="h-[27.5px] shrink-0 flex border-b border-[#f0f0f0]">
                    <span className="ml-[14px] w-px h-full bg-[#eeeeee]" />
                    <span className="ml-[18px] w-px h-full bg-[#eeeeee]" />
                    <span className="ml-[376px] w-px h-full bg-[#eeeeee]" />
                    <span className="ml-[111px] w-px h-full bg-[#eeeeee]" />
                    <span className="ml-[66px] w-px h-full bg-[#eeeeee]" />
                    <span className="ml-[65px] w-px h-full bg-[#eeeeee]" />
                  </div>
                ))}
              </div>
            </div>

            {/* bottom tabs, left group */}
            <div className="h-[32px] shrink-0 flex items-start text-[16.7px] tracking-[-0.4px]">
              <BottomTab icon="tabAutos" label="Autos" active className="w-[87px] pt-[1px]" />
              <BottomTab icon="tabLocals" label="Locals" className="ml-[8px] w-[89px] pt-[1px]" />
              <BottomTab icon="tabWatch" label="Watch 1" className="w-[90px] pt-[1px]" />
              <BottomTab icon="callStack" label="Call Stack" className="ml-[504px] w-[110px] pt-[1px]" />
              <BottomTab icon="breakWin" label="Breakpoints" className="w-[131px] pt-[1px]" />
              <BottomTab icon="cmdWin" label="Command Wi..." className="w-[159px] pt-[1px]" />
              <BottomTab icon="immWin" label="Immediate Wi..." className="w-[166px] pt-[1px]" />
              <BottomTab icon="outWin" label="Output" className="w-[86px] pt-[1px]" />
              <BottomTab icon="errList" label="Error List" active className="w-[107px] !px-[6px] pt-[1px]" />
            </div>
          </div>

          {/* right column */}
          <div className="w-[246px] shrink-0 flex flex-col pt-[10px]">
            <div className="h-[745px] shrink-0 flex flex-col bg-white">
              <TitleBar title="Solution Explorer" />
              <div className="h-[34px] shrink-0 flex items-center bg-[#b8c4d7] pl-[11px]">
                <Ic name="seFiles" className="w-[23px] h-[22px]" />
                <Sep className="ml-[7px]" />
                <Ic name="seCopy" className="ml-[10px] w-[22px] h-[22px]" />
                <Ic name="seRefresh" className="ml-[10px] w-[22px] h-[20px]" dim />
                <Sep className="ml-[7px]" />
                <Ic name="seCode" className="ml-[11px] w-[20px] h-[20px]" />
                <Ic name="seDesign" className="ml-[9px] w-[22px] h-[20px]" />
                <Sep className="ml-[8px]" />
                <Ic name="seGlobe" className="ml-[10px] w-[22px] h-[22px]" />
              </div>
              <div className="flex-1 min-h-0 flex flex-col pt-[2px] text-[15.8px] tracking-[-0.2px] text-[#3c4350] overflow-hidden">
                <div className="h-[25.85px] flex items-center pl-[10px] gap-[5px] whitespace-nowrap">
                  <Ic name="solution" className="w-[16px] h-[16px]" />
                  Solution 'Employee details' (1 project)
                </div>
                <div className="h-[25.85px] flex items-center pl-[7px] whitespace-nowrap font-bold text-[#222]">
                  <Chevron open />
                  <Ic name="webProject" className="ml-[9px] w-[20px] h-[20px]" />
                  <span className="ml-[4px]">Employee details</span>
                </div>
                {treeRows.map((row) => (
                  <div key={row.label} className="h-[25.85px] flex items-center whitespace-nowrap">
                    <div className="ml-[26px] w-[20px]">{row.arrow && <Chevron />}</div>
                    <Ic name={row.icon} className="w-[16px] h-[16px]" />
                    <span className="ml-[4px]">{row.label}</span>
                  </div>
                ))}
                <div className="h-[25.85px] flex items-center whitespace-nowrap">
                  <Chevron open className="ml-[25px]" />
                  <div className="ml-[11px] w-[146px] h-full flex items-center pl-[2px] bg-[#e6e6e6]">
                    <Ic name="aspx" className="w-[16px] h-[16px]" />
                    <span className="ml-[4px]">WebForm1.aspx</span>
                  </div>
                </div>
                <div className="h-[25.85px] flex items-center whitespace-nowrap">
                  <Ic name="csFile" className="ml-[65px] w-[15px] h-[15px]" />
                  <span className="ml-[4px]">WebForm1.aspx.cs</span>
                </div>
                <div className="h-[25.85px] flex items-center whitespace-nowrap">
                  <Ic name="csFile" className="ml-[65px] w-[15px] h-[15px]" />
                  <span className="ml-[4px]">WebForm1.aspx.designer.cs</span>
                </div>
              </div>
              <div className="h-[23px] shrink-0 flex items-center bg-[#f0f0f0]">
                <Chevron className="rotate-180 ml-[9px] !w-[9px] !h-[9px] [&>path]:stroke-[#444]" />
                <div className="ml-[7px] w-[153px] h-full bg-[#c8c8c8]" />
                <Chevron className="ml-[49px] !w-[9px] !h-[9px] [&>path]:stroke-[#444]" />
              </div>
            </div>
            <div className="h-[32px] shrink-0 flex items-start text-[16.7px] tracking-[-0.4px]">
              <BottomTab icon="finder" label="Sol..." active className="w-[81px] !px-[9px] pt-[1px]" />
              <BottomTab icon="chartWin" label="Tea..." className="ml-[9px] w-[82px] pt-[1px]" />
              <BottomTab icon="props" label="Pro..." className="pt-[1px]" />
            </div>
          </div>
        </div>

        {/* Status bar */}
        <div className="h-[32px] shrink-0 flex items-start pt-[13px] leading-[18px] text-[16.7px] tracking-[-0.4px] text-[#d5dce8] whitespace-nowrap">
          <span className="ml-[6px] w-[1300px]">Item(s) Saved</span>
          <span className="w-[131px]">Ln 63</span>
          <span className="w-[129px]">Col 1</span>
          <span className="w-[192px]">Ch 1</span>
          <span>INS</span>
        </div>
      </div>
    </div>
  );
}
